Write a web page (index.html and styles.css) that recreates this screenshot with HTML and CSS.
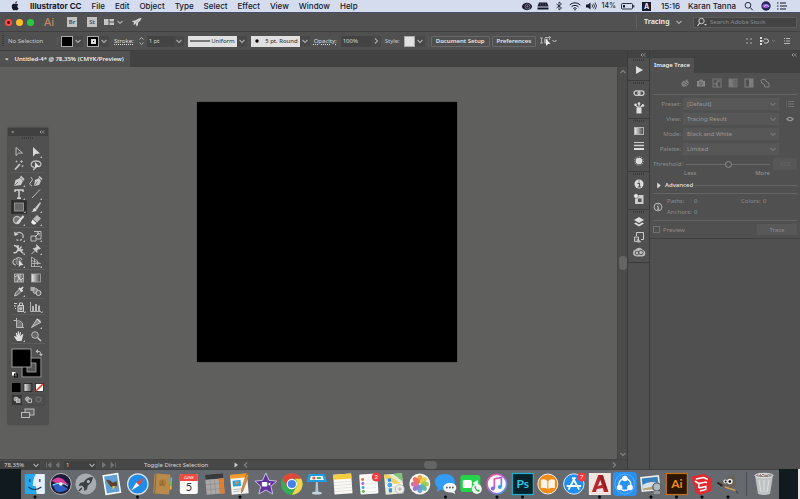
FILE: index.html
```html
<!DOCTYPE html>
<html lang="en">
<head>
<meta charset="utf-8">
<title>Untitled-4* @ 78,35% (CMYK/Preview)</title>
<link rel="stylesheet" href="styles.css">
</head>
<body>
<svg class="defs" aria-hidden="true">
  <symbol id="down" viewBox="0 0 8 8"><path d="M1.500 3l2.500 2.500L6.500 3" fill="none" stroke="currentColor" stroke-width="1.100"/></symbol>
  <symbol id="collapse" viewBox="0 0 6 4"><path d="M2.500 .5L1 2l1.500 1.500M5 .5L3.500 2 5 3.500" fill="none" stroke="currentColor" stroke-width=".9"/></symbol>
  <symbol id="grip" viewBox="0 0 12 2"><path d="M0 1h12" stroke="currentColor" stroke-width="2" stroke-dasharray="1 1"/></symbol>
  <symbol id="cloud" viewBox="0 0 14 12"><path d="M4.500 10.500a3.500 3.500 0 0 1-.8-6.900A4 4 0 0 1 10.800 4a3.300 3.300 0 0 1-.3 6.500z" fill="#bbb"/><circle cx="5" cy="7" r="1.800" fill="none" stroke="#505050" stroke-width=".9"/><circle cx="9" cy="6.500" r="2.200" fill="none" stroke="#505050" stroke-width=".9"/></symbol>
</svg>

<nav class="menubar" aria-label="Menu bar">
  <svg class="apple" viewBox="0 0 10 10"><path d="M7.400 5.200c0-1 .7-1.500.9-1.700C7.600 2.600 6.300 2.500 5.300 3c-1-.5-2.700-.3-3.300 1-.7 1.600 0 4 1.200 5.100.8.600 1.300 0 2.100 0s1.300.600 2.100 0c.5-.5 1-1.200 1.200-1.900-.7-.3-1.200-1.100-1.200-2zM5.200 2.500C5.100 1.300 6 .4 7 .2c.1 1.200-.7 2.100-1.800 2.300z" fill="#15192b"/></svg>
  <a href="#" class="app-name">Illustrator CC</a>
  <a href="#">File</a><a href="#">Edit</a><a href="#">Object</a><a href="#">Type</a><a href="#">Select</a><a href="#">Effect</a><a href="#">View</a><a href="#">Window</a><a href="#">Help</a>
  <div class="tray">
    <svg viewBox="0 0 12 10"><ellipse cx="6" cy="5.500" rx="5" ry="3.700" fill="#15192b"/><circle cx="6.500" cy="5.500" r="2.500" fill="none" stroke="#778"/><circle cx="6.500" cy="5.500" r="1" fill="#889"/></svg>
    <svg viewBox="0 0 12 10"><path d="M2 1.500h8l1.500 4H.5z M.5 6.500h11v2H.5z" fill="#15192b"/><path d="M6 1v5M4 1L3 6M8 1l1 5" stroke="#667" stroke-width=".6"/></svg>
    <svg viewBox="0 0 12 10"><path d="M3.500 3l5 4L6 9V1l2.500 2-5 4" fill="none" stroke="#15192b" stroke-width=".8"/></svg>
    <svg viewBox="0 0 12 10"><path d="M.7 4a7.500 7.500 0 0 1 10.600 0M2.500 5.800a5 5 0 0 1 7 0M4.300 7.500a2.500 2.500 0 0 1 3.400 0" fill="none" stroke="#15192b" stroke-width="1"/><circle cx="6" cy="8.800" r=".8" fill="#15192b"/></svg>
    <svg viewBox="0 0 12 10"><path d="M1 3.500h2L5.500 1.500v7L3 6.500H1z" fill="#15192b"/><path d="M7 3.500q1.200 1.500 0 3M8.500 2.500q2 2.500 0 5M10 1.500q3 3.500 0 7" fill="none" stroke="#15192b" stroke-width=".8"/></svg>
    <span class="percent">14%</span>
    <svg class="battery" viewBox="0 0 14 10"><rect x=".5" y="2.500" width="11" height="5.500" rx="1" fill="none" stroke="#15192b" stroke-width=".9"/><path d="M2 4h2v2.500H2z" fill="#15192b"/><path d="M12.800 4v2.500" stroke="#15192b"/></svg>
    <b class="input-source">A</b>
    <span>15:16</span>
    <span>Karan Tanna</span>
    <svg class="tray-search" viewBox="0 0 12 10"><circle cx="5" cy="4.300" r="2.900" fill="none" stroke="#15192b" stroke-width=".9"/><path d="M7.200 6.500l2.600 2.800" stroke="#15192b" stroke-width="1"/></svg>
    <svg class="tray-siri" viewBox="0 0 10 10"><circle cx="5" cy="5" r="4.700" fill="#23264e"/><path d="M1 5c2-3 5-3 8 0-3 3-6 3-8 0z" fill="#b04ad0"/><path d="M3 5.500q2-3 5 0" stroke="#7ee7ff" fill="none"/></svg>
    <svg class="tray-list" viewBox="0 0 12 10"><path d="M1 2h1.500M1 5h1.500M1 8h1.500M4 2h6M4 5h7M4 8h6" stroke="#15192b" stroke-width="1.100"/></svg>
  </div>
</nav>

<header class="appbar">
  <div class="lights"><button class="light red" aria-label="Close"></button><button class="light yellow" aria-label="Minimise"></button><button class="light green" aria-label="Zoom"></button></div>
  <span class="ai-logo">Ai</span>
  <button class="mini">Br</button>
  <button class="mini">St</button>
  <button class="arrange" aria-label="Arrange documents"><svg viewBox="0 0 10 8"><path d="M0 1h4.500v6H0zM5.500 1H10v2.500H5.500zM5.500 4.500H10V7H5.500z" fill="#c6c6c6"/></svg><svg class="chev"><use href="#down"/></svg></button>
  <svg class="rocket" viewBox="0 0 12 12"><path d="M11.500 1C8 1.500 6 2.500 4.500 4L1 4.500 0 6l2.500.3L1.500 9.500 4.700 8.500 5.500 11.500 7 10l.5-3.500C9.500 5.500 11 3.500 11.500 1z" fill="#d0d0d0"/><path d="M7.300 4.500L3 9" stroke="#777" stroke-width=".5"/></svg>
  <div class="workspace-pick"><label class="sr" for="ws">Workspace</label><select id="ws"><option>Tracing</option></select><svg class="chev"><use href="#down"/></svg></div>
  <label class="stock"><svg viewBox="0 0 12 10"><circle cx="5.500" cy="4" r="2.700" fill="none" stroke="#ccc"/><path d="M3.700 6L1.500 9" stroke="#ccc" stroke-width="1.200"/><path d="M8 7h3L9.500 8.700z" fill="#ccc"/></svg><input type="search" aria-label="Search Adobe Stock" placeholder="Search Adobe Stock"></label>
</header>

<div class="controlbar">
  <svg class="vgrip" viewBox="0 0 2 12"><path d="M1 0v12" stroke="#3c3c3c" stroke-width="2" stroke-dasharray="1 1"/></svg>
  <span class="selection">No Selection</span>
  <div class="pair first"><button class="swatch fill" aria-label="Fill"></button><button class="drop" aria-label="Fill options"><svg class="chev"><use href="#down"/></svg></button></div>
  <div class="pair"><button class="swatch stroke" aria-label="Stroke colour"><i></i></button><button class="drop" aria-label="Stroke options"><svg class="chev"><use href="#down"/></svg></button></div>
  <label class="link stroke-label" for="weight">Stroke:</label>
  <button class="stepper" aria-label="Step weight"><svg viewBox="0 0 7 10"><path d="M1.500 3.500l2-2 2 2M1.500 6.500l2 2 2-2" fill="none" stroke="#bbb" stroke-width=".9"/></svg></button>
  <div class="pair"><input id="weight" class="box weight" value="1 pt"><button class="drop" aria-label="Weights"><svg class="chev"><use href="#down"/></svg></button></div>
  <div class="pair"><button class="light-box"><svg class="profile" viewBox="0 0 20 4"><path d="M0 2h20" stroke="#111" stroke-width="1"/></svg>Uniform</button><button class="drop" aria-label="Profiles"><svg class="chev"><use href="#down"/></svg></button></div>
  <div class="pair"><button class="light-box"><svg class="dot" viewBox="0 0 4 4"><circle cx="2" cy="2" r="1.700"/></svg>5 pt. Round</button><button class="drop" aria-label="Brushes"><svg class="chev"><use href="#down"/></svg></button></div>
  <label class="link" for="opacity">Opacity:</label>
  <div class="pair"><input id="opacity" class="box opacity" value="100%"><button class="drop" aria-label="Opacity slider"><svg class="chev side"><use href="#down"/></svg></button></div>
  <span>Style:</span>
  <div class="pair"><button class="swatch white" aria-label="Graphic style"></button><button class="drop" aria-label="Styles"><svg class="chev"><use href="#down"/></svg></button></div>
  <div class="doc-buttons"><button>Document Setup</button><button>Preferences</button></div>
  <svg class="similar" viewBox="0 0 18 10"><path d="M0 2h3M0 7h3M1.500 2v5M5 1.500h6M9.500 0v4" stroke="#aaa" fill="none"/><path d="M4 2.500h4v5H4z" fill="#999"/><path d="M6 3v7l2-2 2.500-.2z" fill="#eee"/><path d="M12.500 4l2 2 2-2" stroke="#ccc" fill="none"/></svg>
  <div class="bar-end">
    <svg viewBox="0 0 8 8"><path d="M1 1h2v2H1zM5 1h2v2H5zM1 5h2v2H1zM5 5h2v2H5z" fill="#808080"/></svg>
    <svg class="snap" viewBox="0 0 18 8"><path d="M1 0h2v2H1zM1 3h2v2H1zM1 6h2v2H1z" fill="#ddd"/><path d="M3 4h2M5 2h2.500a2 2 0 0 1 0 4H5" stroke="#ccc" fill="none"/><path d="M13 3l1.500 1.500L16 3" stroke="#777" fill="none"/></svg>
    <svg viewBox="0 0 8 8"><path d="M1 1.500h1M3 1.500h4M3 4h4M1 6.500h6M1.500 3.500v1" stroke="#b5b5b5" fill="none"/></svg>
  </div>
</div>

<main class="workspace">
  <section class="document">
    <div class="tabs"><div class="tab"><button aria-label="Close tab">×</button><span>Untitled-4* @ 78,35% (CMYK/Preview)</span></div></div>
    <div class="stage">
      <div class="canvas">
        <div class="artboard"></div>
        <aside class="tools" aria-label="Tools">
          <div class="tools-head"><span>×</span><svg><use href="#collapse"/></svg></div>
          <svg class="grip"><use href="#grip"/></svg>
          <div class="group">
            <svg class="tool" viewBox="0 0 14 12"><path d="M4 1.500v8l2.500-2.300L10.500 7z" fill="none" stroke="#c8c8c8" stroke-width=".9"/></svg>
            <svg class="tool more" viewBox="0 0 14 12"><path d="M4 1v9.500L6.500 8l4.500-.5z" fill="#d8d8d8"/><path class="corner" d="M13 10v2h-2z"/></svg>
            <svg class="tool" viewBox="0 0 14 12"><path d="M3 10.500L8 5" stroke="#ccc" stroke-width="1.700"/><path d="M9.500 1v3M8 2.500h3M4.500 1.500v2M3.500 2.500h2M10.500 6v2M9.500 7h2" stroke="#bbb" stroke-width=".8"/></svg>
            <svg class="tool" viewBox="0 0 14 12"><path d="M5 8C1 8 1 2 7 2s6 5 3 5.500M5 8q1 2-1 3" fill="none" stroke="#bbb" stroke-width="1.300"/><path d="M6 3v7l1.800-1.800L11 8z" fill="#ddd"/></svg>
          </div>
          <div class="group">
            <svg class="tool" viewBox="0 0 14 12"><path d="M2 11l1.500-6L8 3l3 3-2 4z" fill="#ccc"/><path d="M8.500 1.500l3.500 3.500" stroke="#ccc" stroke-width="1.800"/><path d="M2.500 10.500l3.500-3.500" stroke="#505050" stroke-width=".7"/><path class="corner" d="M13 10v2h-2z"/></svg>
            <svg class="tool" viewBox="0 0 14 12"><path d="M5 11l1-6 4-2 2 3-2 4z" fill="#ccc"/><path d="M10 1.500L13 4.500" stroke="#ccc" stroke-width="1.600"/><path d="M2 2q3 3 0 5t1 4" fill="none" stroke="#bbb"/><path d="M5.500 10.500l3-4" stroke="#505050" stroke-width=".7"/></svg>
            <svg class="tool" viewBox="0 0 14 12"><path d="M3 4V2h8v2M7 2v8M5 10.200h4" fill="none" stroke="#d4d4d4" stroke-width="1.400"/><path class="corner" d="M13 10v2h-2z"/></svg>
            <svg class="tool" viewBox="0 0 14 12"><path d="M3 10l8-8.500" stroke="#bbb"/><path class="corner" d="M13 10v2h-2z"/></svg>
            <svg class="tool selected" viewBox="0 0 14 12"><rect x="2.500" y="2" width="9" height="8" fill="#666" stroke="#999" stroke-width=".9"/><path class="corner" d="M13.500 10v2h-2z"/></svg>
            <svg class="tool" viewBox="0 0 14 12"><path d="M6 7l5-6 1 1-4 6.500z" fill="#ccc"/><path d="M2 10.500q2 0 2.500-2.500T8 9q-1.500 2.500-6 1.500z" fill="#ddd"/><path class="corner" d="M13 10v2h-2z"/></svg>
            <svg class="tool" viewBox="0 0 14 12"><circle cx="5" cy="6" r="3.600" fill="#777" stroke="#bbb" stroke-width="1.200"/><path d="M5 9.500l6.500-7.500" stroke="#ddd" stroke-width="2"/><path class="corner" d="M13 10v2h-2z"/></svg>
            <svg class="tool" viewBox="0 0 14 12"><path d="M8 1l4 3.500-4 4-4-3.500z" fill="#bbb"/><path d="M3.500 5.500l4 3.500L6 10.500H4L2 8.500z" fill="#eee"/><path class="corner" d="M13 10v2h-2z"/></svg>
          </div>
          <div class="group">
            <svg class="tool" viewBox="0 0 14 12"><path d="M3.500 4.500a4 4 0 1 1 1 5" fill="none" stroke="#bbb" stroke-width="1.300" stroke-dasharray="12 1.500 2 1.500"/><path d="M2 1.500l.5 4.500 4-1.500z" fill="#ccc"/><path class="corner" d="M13 10v2h-2z"/></svg>
            <svg class="tool" viewBox="0 0 14 12"><path d="M2 6h5v5H2zM5 1.500h7V9H7" fill="none" stroke="#bbb"/><path d="M6 7l4-4M7.500 3H10v2.500" stroke="#ccc" fill="none"/><path class="corner" d="M13 10v2h-2z"/></svg>
            <svg class="tool" viewBox="0 0 14 12"><path d="M2 2.500q3 0 4 3t5 1M1.500 9.500q3 1 4-2t3 0 3 2.500M6 2l.5 5M9.500 3.500L6 8" fill="none" stroke="#ccc" stroke-width="1.400"/><path class="corner" d="M13 10v2h-2z"/></svg>
            <svg class="tool" viewBox="0 0 14 12"><path d="M7.500 1.500l4 4-1.200.5-1-.2L8 7.500 8 9.500 4 5.500l2-.2L7.700 4z" fill="#d0d0d0" stroke="#d0d0d0" stroke-width=".6"/><path d="M6 7.500L2.500 11" stroke="#ccc"/><path class="corner" d="M13 10v2h-2z"/></svg>
            <svg class="tool" viewBox="0 0 14 12"><path d="M4 9a3 3 0 0 1 0-6 3.500 3.500 0 0 1 6 1" fill="none" stroke="#bbb" stroke-width="1.200"/><circle cx="6.500" cy="6" r="2.500" fill="#777" stroke="#bbb" stroke-dasharray="1 1"/><path d="M7 4.500v6.500l1.500-1.700 3-.3z" fill="#ddd"/><path class="corner" d="M13 10v2h-2z"/></svg>
            <svg class="tool" viewBox="0 0 14 12"><path d="M2.500 1v10M2.500 1l6 4v4M2.500 4.500l9 3M2.500 7.500h9M2.500 10.500h9M5.500 3v8" fill="none" stroke="#bbb" stroke-width=".8"/><path class="corner" d="M13 10v2h-2z"/></svg>
          </div>
          <div class="group">
            <svg class="tool" viewBox="0 0 14 12"><rect x="2.500" y="2" width="9" height="8" fill="#777" stroke="#bbb" stroke-width=".8"/><path d="M3 5q3-3 4 1t4 0M5 10q3-3 1-8M8.500 2q-2 4 1 8" fill="none" stroke="#ddd" stroke-width=".8"/></svg>
            <svg class="tool" viewBox="0 0 14 12"><rect x="2.500" y="2" width="9" height="8" fill="url(#gr)" stroke="#aaa" stroke-width=".8"/></svg>
            <svg class="tool" viewBox="0 0 14 12"><path d="M2.500 11l1-3L8 3.500l2 2L5.500 10z" fill="#777" stroke="#ccc" stroke-width=".9"/><path d="M7 3l3.500 3.500M9 4.500l2-2.500" stroke="#ddd" stroke-width="1.800"/><path class="corner" d="M13 10v2h-2z"/></svg>
            <svg class="tool" viewBox="0 0 14 12"><rect x="1.500" y="2" width="4.500" height="4" fill="#aaa"/><circle cx="6.500" cy="6" r="2.500" fill="#888" stroke="#bbb"/><circle cx="9.500" cy="8" r="2.500" fill="#666" stroke="#ccc"/></svg>
          </div>
          <div class="group">
            <svg class="tool" viewBox="0 0 14 12"><rect x="6" y="4.500" width="5.500" height="6" fill="#777" stroke="#ccc"/><path d="M7.500 4V2h3v2M2 2.500h3M2 5h2M3 7.500h1" stroke="#ccc" fill="none"/><circle cx="8.700" cy="7.500" r="1.500" fill="#bbb"/><path class="corner" d="M13.500 10v2h-2z"/></svg>
            <svg class="tool" viewBox="0 0 14 12"><path d="M1.500 1v9.500H12" fill="none" stroke="#bbb" stroke-width=".9"/><path d="M4 10V5M7 10V3M10 10V4.500" stroke="#ccc" stroke-width="1.600"/><path class="corner" d="M13.500 10v2h-2z"/></svg>
          </div>
          <div class="group last">
            <svg class="tool" viewBox="0 0 14 12"><path d="M1.500 3.500h3M4.500 1v9.500H12M4.500 4h3.500l2.500 2v4" fill="none" stroke="#bbb"/><path d="M5 4.500h2.500L10 6.500v3.500H5z" fill="#777"/></svg>
            <svg class="tool" viewBox="0 0 14 12"><path d="M2.500 10.500L8 2q4 1 3.500 3.500L6 8.500z" fill="#888" stroke="#ccc" stroke-width=".9"/><path d="M8 2l3.500 3.500" stroke="#ddd"/><path class="corner" d="M13 10v2h-2z"/></svg>
            <svg class="tool" viewBox="0 0 14 12"><path d="M5 11L2 6.500l1-.5 1.500 1L3.800 3l1-.3 1 2.800V1.500h1.200v4l1-3.500 1 .3-.7 4L10.500 4l.9.500L9.500 11z" fill="#ddd"/><path class="corner" d="M13 10v2h-2z"/></svg>
            <svg class="tool" viewBox="0 0 14 12"><circle cx="6" cy="5" r="3.300" fill="#666" stroke="#bbb"/><path d="M8.500 7.500l3.500 3.500" stroke="#ccc" stroke-width="1.500"/></svg>
          </div>
          <svg class="colors" viewBox="0 0 34 32"><rect x="14" y="13" width="13" height="13" fill="none" stroke="#050505" stroke-width="5"/><rect x="11" y="10" width="19" height="19" fill="none" stroke="#999" stroke-width=".8"/><rect x="16" y="15" width="9" height="9" fill="#555" stroke="#aaa" stroke-width=".8"/><rect x="1" y="1" width="19" height="18" fill="#000" stroke="#aaa" stroke-width=".9"/><path d="M26 3.500h2q2 0 2 3" fill="none" stroke="#bbb"/><path d="M27 1v4.500L24.500 3.500zM28 6h4l-2 2.500z" fill="#bbb"/><path d="M1 24h3.500v3.500H1z" fill="#fff"/><rect x="3.500" y="26" width="3" height="3" fill="none" stroke="#111"/></svg>
          <svg class="modes" viewBox="0 0 34 11"><rect x="1" y="1" width="8.500" height="9" fill="#000"/><rect x="13" y="1.500" width="8" height="8" fill="url(#gr)" stroke="#222" stroke-width=".8"/><rect x="24.500" y="1.500" width="8" height="8" fill="#fff" stroke="#222" stroke-width=".8"/><path d="M25 9l7-7" stroke="#f0351f" stroke-width="1.600"/></svg>
          <svg class="modes" viewBox="0 0 34 11"><rect x="1" y="0" width="32" height="10" fill="none" stroke="#454545" stroke-width=".8"/><rect x="1" y="0" width="10" height="10" fill="#373737"/><g fill="#999" stroke="#ccc" stroke-width=".8"><circle cx="5" cy="4" r="2"/><rect x="5.500" y="4" width="3.500" height="3.500"/><circle cx="16.500" cy="4" r="2"/><rect x="17" y="4" width="3.500" height="3.500" fill="#505050"/></g><circle cx="27.500" cy="4.500" r="2.500" fill="none" stroke="#777" stroke-width=".9"/></svg>
          <svg class="screens" viewBox="0 0 34 14"><rect x="14" y="2" width="9" height="6" fill="#666" stroke="#bbb"/><rect x="10.500" y="5.500" width="8" height="5" fill="#555" stroke="#bbb"/></svg>
        </aside>
      </div>
      <div class="vscroll"><svg class="chev up"><use href="#down"/></svg><i></i><svg class="chev"><use href="#down"/></svg></div>
    </div>
    <footer class="status">
      <div class="zoom"><span>78,35%</span><svg class="chev"><use href="#down"/></svg></div>
      <svg class="nav" viewBox="0 0 18 8"><path d="M2.500 1.500v5M7 1.500v5L4 4zM15 1.500v5L12 4z" stroke="#777" fill="#777" stroke-width=".7"/></svg>
      <div class="page"><span>1</span><svg class="chev"><use href="#down"/></svg></div>
      <svg class="nav" viewBox="0 0 18 8"><path d="M2.500 1.500v5L5.500 4zM11 1.500v5L14 4zM15.500 1.500v5" stroke="#777" fill="#777" stroke-width=".7"/></svg>
      <span class="hint">Toggle Direct Selection</span>
      <svg class="play" viewBox="0 0 8 8"><path d="M2.500 1.500v5L6 4z" fill="#ccc"/></svg>
      <div class="hscroll"><svg class="chev back"><use href="#down"/></svg><i></i><svg class="chev side"><use href="#down"/></svg></div>
    </footer>
  </section>

  <aside class="strip" aria-label="Collapsed panels">
    <div class="strip-head"><svg><use href="#collapse"/></svg></div>
    <div class="strip-group"><svg class="grip"><use href="#grip"/></svg>
      <svg viewBox="0 0 14 12"><path d="M4 2v8l7-4z" fill="#ddd"/></svg></div>
    <div class="strip-group"><svg class="grip"><use href="#grip"/></svg>
      <svg viewBox="0 0 14 12"><rect x="2" y="3.800" width="6" height="4.500" rx="2.200" fill="none" stroke="#ccc" stroke-width="1.300"/><rect x="6" y="3.800" width="6" height="4.500" rx="2.200" fill="none" stroke="#ccc" stroke-width="1.300"/></svg>
      <svg viewBox="0 0 14 12"><path d="M4.500 6h5v5.500h-5z" fill="#ddd"/><path d="M7 6V1M6 6L3.500 3M8 6l3-3.500" stroke="#ccc" stroke-width="1.200"/><circle cx="3.500" cy="2.800" r="1.300" fill="#ddd"/><circle cx="7" cy="1.500" r="1.300" fill="#ddd"/><circle cx="11" cy="3.500" r="1.300" fill="#ddd"/></svg></div>
    <div class="strip-group"><svg class="grip"><use href="#grip"/></svg>
      <svg viewBox="0 0 14 12"><rect x="2.500" y="2.500" width="9" height="7" fill="url(#gr)" stroke="#bbb" stroke-width=".9"/></svg>
      <svg viewBox="0 0 14 12"><path d="M2 2.500h10" stroke="#ccc"/><path d="M2 5.500h10" stroke="#ccc" stroke-width="1.500"/><path d="M2 9h10" stroke="#ddd" stroke-width="2"/></svg>
      <svg viewBox="0 0 14 12"><circle cx="7" cy="6" r="4.300" fill="none" stroke="#999" stroke-width="1.200" stroke-dasharray="1 1"/><circle cx="7" cy="6" r="3.300" fill="#ddd"/></svg></div>
    <div class="strip-group"><svg class="grip"><use href="#grip"/></svg>
      <svg viewBox="0 0 14 12"><circle cx="7" cy="6" r="4.500" fill="#ddd"/><path d="M5.500 5.300h2V9M5.500 9h3.500M6.500 3h1.200" stroke="#505050" fill="none" stroke-width="1.200"/></svg>
      <svg viewBox="0 0 14 12"><path d="M3 2h8.500v9H3z" fill="#ccc"/><circle cx="4" cy="3" r="2.300" fill="#eee" stroke="#505050" stroke-width=".6"/><path d="M6 5.500h3.500V9H6z" fill="#505050"/></svg></div>
    <div class="strip-group"><svg class="grip"><use href="#grip"/></svg>
      <svg viewBox="0 0 14 12"><path d="M7 1l5 3-5 3-5-3z" fill="#ddd"/><path d="M2 7.500L7 10.500l5-3-1.800-1L7 8.400 3.800 6.500z" fill="#ddd"/></svg>
      <svg viewBox="0 0 14 12"><path d="M4.500 5V1.500h7v7H9" fill="none" stroke="#ccc"/><path d="M2.500 6h4v4.500h-4zM6 8l2.500 3h-3z" fill="#666" stroke="#ccc" stroke-width=".9"/></svg>
      <svg><use href="#cloud"/></svg></div>
  </aside>

  <section class="panel">
    <div class="panel-head"><svg><use href="#collapse"/></svg></div>
    <div class="panel-tabs"><h2>Image Trace</h2></div>
    <form class="trace" onsubmit="return false">
      <div class="presets">
        <svg viewBox="0 0 10 10"><path d="M1 6q2-4 4-3l2-2 2 4-2 3-4 1z" fill="#808080"/><path d="M3 5l4 2M5 3l3 3" stroke="#505050" stroke-width=".7"/></svg>
        <svg viewBox="0 0 10 10"><path d="M1 3h2l1-1.500h2L7 3h2v5.500H1z" fill="#888"/><circle cx="5" cy="5.500" r="1.600" fill="#888" stroke="#505050" stroke-width=".9"/></svg>
        <svg viewBox="0 0 10 10"><rect x="1" y="1" width="8" height="8" fill="none" stroke="#7a7a7a"/><path d="M2 6h3V3h3M5 6v3" stroke="#888" fill="none"/></svg>
        <svg viewBox="0 0 10 10"><rect x="1" y="1" width="8" height="8" fill="url(#dim)" stroke="#777" stroke-width=".8"/></svg>
        <svg viewBox="0 0 10 10"><rect x="1" y="1" width="8" height="8" fill="none" stroke="#808080"/><path d="M5 1h4v8H5z" fill="#7c7c7c"/></svg>
        <svg viewBox="0 0 10 10"><path d="M1 2l4-.8 1 2.300 3 1.500v4H5L4 6 1.500 5z" fill="none" stroke="#888" stroke-width=".9"/></svg>
      </div>
      <div class="row"><label for="preset">Preset:</label><div class="field"><select id="preset"><option>[Default]</option></select><svg class="chev"><use href="#down"/></svg></div><svg class="side-icon" viewBox="0 0 8 8"><path d="M0 1.500h1M2 1.500h6M0 4h1M2 4h6M0 6.500h1M2 6.500h6" stroke="#777" stroke-width=".9"/></svg></div>
      <div class="row"><label for="view">View:</label><div class="field"><select id="view"><option>Tracing Result</option></select><svg class="chev"><use href="#down"/></svg></div><svg class="side-icon" viewBox="0 0 8 8"><path d="M1 4q3-3.500 6 0-3 3.500-6 0z" fill="none" stroke="#999" stroke-width="1.200"/></svg></div>
      <div class="row"><label for="mode">Mode:</label><div class="field"><select id="mode"><option>Black and White</option></select><svg class="chev"><use href="#down"/></svg></div></div>
      <div class="row"><label for="palette">Palette:</label><div class="field"><select id="palette"><option>Limited</option></select><svg class="chev"><use href="#down"/></svg></div></div>
      <div class="threshold"><label for="threshold">Threshold:</label><input id="threshold" type="range" min="0" max="255" value="128"><input class="value" aria-label="Threshold value" value="128" disabled></div>
      <div class="limits"><span>Less</span><span>More</span></div>
      <button class="advanced" type="button"><svg viewBox="0 0 6 8"><path d="M1 .5v7L5 4z" fill="#ddd"/></svg>Advanced</button>
      <div class="stats">
        <svg viewBox="0 0 10 10"><circle cx="5" cy="5" r="3.900" fill="none" stroke="#c5c5c5" stroke-width=".9"/><path d="M4 4.400h1.200V7M4 7.200h2.300M4.700 2.700h.9" stroke="#ccc" stroke-width=".9" fill="none"/></svg>
        <dl><dt>Paths:</dt><dd>0</dd><dt class="far">Colors:</dt><dd>0</dd><dt>Anchors:</dt><dd>0</dd></dl>
      </div>
      <div class="actions"><label><input type="checkbox">Preview</label><button type="button">Trace</button></div>
    </form>
  </section>
</main>

<footer class="desktop">
  <div class="dock">
    <svg viewBox="0 0 24 24"><rect x="2" y="2" width="20" height="20" rx="1" fill="#23a9f0"/><path d="M13 2h8a1 1 0 0 1 1 1v18a1 1 0 0 1-1 1h-7q-1-4-1-8h-3q0-7 3-12z" fill="#e8eef6"/><path d="M7 7v3M17 7v3M5.500 15q6.500 5 13 0" fill="none" stroke="#143a5c" stroke-width="1.200"/></svg>
    <svg viewBox="0 0 24 24"><circle cx="12" cy="12" r="10.500" fill="#1d1b3a" stroke="#bbb"/><path d="M3 9q5-6 11-2l6 6q-7-2-9 0z" fill="#d8409c"/><path d="M3 12l9 0 7 5q-6 5-12 2z" fill="#2d5ec0"/><path d="M4 13q8-4 15 1" stroke="#8ff0ff" stroke-width="1" fill="none"/><circle cx="12" cy="12" r="1.800" fill="#fff"/></svg>
    <svg viewBox="0 0 24 24"><circle cx="12" cy="12" r="10.500" fill="#a7adaf"/><path d="M19 5q-6 0-9 5L6 11l-1 3 3-.5 2.500 2.500L10 19l3-1.500 1-4Q19 10 19 5z" fill="#3a4146"/><circle cx="14.500" cy="9.500" r="1.500" fill="#bbb"/><path d="M5 19l3-3" stroke="#3a4146" stroke-width="1.500"/></svg>
    <svg viewBox="0 0 24 24"><g transform="rotate(-9 12 12)"><rect x="4" y="2" width="16" height="20" fill="#fff"/><rect x="5.500" y="3.500" width="13" height="17" fill="#5f9fd6"/><path d="M7 7q4 0 6 4l4-1q1 5-2 6l-4-1-2-3z" fill="#5d432a"/><path d="M12 14l4 1-4 3z" fill="#d9b85b"/></g></svg>
    <svg viewBox="0 0 24 24"><circle cx="12" cy="12" r="10.200" fill="#208de8" stroke="#dfe3e6" stroke-width="1.200"/><path d="M18.500 5.500l-5 8-3-3z" fill="#f04438"/><path d="M5.500 18.500l5-8 3 3z" fill="#f5f5f5"/></svg>
    <svg viewBox="0 0 24 24"><g transform="rotate(4 12 12)"><path d="M19 5h2v4h-2z" fill="#54b8ef"/><path d="M19 9h2v4h-2z" fill="#63bf54"/><path d="M19 13h2v4h-2z" fill="#f3b232"/><rect x="3" y="2" width="16" height="20" rx="1" fill="#b88a4c"/><path d="M4.500 2v20" stroke="#8c642f"/><circle cx="11.500" cy="11" r="3.500" fill="#a67a3c"/><path d="M9 14q2.500-4 5 0M11.500 8.500v3" stroke="#8d662f" fill="none"/></g></svg>
    <svg viewBox="0 0 24 24"><rect x="3" y="2" width="18" height="20" rx="2" fill="#fafafa"/><path d="M3 9V4a2 2 0 0 1 2-2h14a2 2 0 0 1 2 2v5z" fill="#ef4a43"/><text class="cal-month" x="12" y="7">JUNE</text><text class="cal-day" x="12" y="19">5</text></svg>
    <svg viewBox="0 0 24 24"><g transform="rotate(-5 12 12)"><rect x="3" y="2" width="18" height="20" fill="#aaa9a7"/><path d="M3 2h18v5H3z" fill="#363a3c"/><path d="M16.500 7H21v15h-4.500z" fill="#ed7c25"/><path d="M3 12h18M3 17h18M7.500 7v15M12 7v15M16.500 7v15" stroke="#8a8682" stroke-width=".5"/></g></svg>
    <svg viewBox="0 0 24 24"><g transform="rotate(-5 12 12)"><path d="M3 3h17v19H3z" fill="#f5f4f1"/><path d="M3 2h17v4H3z" fill="#f39a2d"/><rect x="5" y="8" width="8" height="6" fill="#1ca3e5"/><path d="M9 13L7 10q1-2 2-.5 1-1.500 2 .5z" fill="#f2872f"/><path d="M5 17h8M5 19h6" stroke="#aaa" stroke-width=".7"/></g><path d="M21 3l-6 16-1.500 2V18l5-16z" fill="#dd9039" stroke="#8c5a21" stroke-width=".5"/></svg>
    <svg viewBox="0 0 24 24"><path d="M12 1l3.200 7.300 7.800.8-5.900 5.200L18.900 22 12 18l-6.900 4 1.800-7.700L1 9.100l7.800-.8z" fill="#5f329d" stroke="#c9bdde" stroke-width="1"/><rect x="8" y="10" width="5.500" height="4.500" rx="1" fill="#fff"/><path d="M14 12l2.500-1.500v3.500z" fill="#fff"/></svg>
    <svg viewBox="0 0 24 24"><circle cx="12" cy="12" r="10.800" fill="#3aaa58"/><path d="M2.600 6.700A10.800 10.800 0 0 1 21.400 6.700H12l-4.700 8z" fill="#df473c"/><path d="M21.400 6.700A10.800 10.800 0 0 1 12 22.800l4.700-8L17 9l-2-2.300z" fill="#fbd14b"/><circle cx="12" cy="12" r="5.200" fill="#fff"/><circle cx="12" cy="12" r="4.100" fill="#4384ef"/></svg>
    <svg viewBox="0 0 24 24"><path d="M4 2h16l2 7v1H2V9z" fill="#239ce2"/><path d="M6 4h12l1 4H5z" fill="#edf6fb"/><circle cx="9" cy="6" r="1.500" fill="#e75c4b"/><path d="M12 5h4v2h-4z" fill="#45b36b"/><path d="M11 10h2l.5 10h-3z" fill="#aec5d3"/><ellipse cx="12" cy="21" rx="5" ry="1.600" fill="#c5d5df"/></svg>
    <svg viewBox="0 0 24 24"><g transform="rotate(-4 12 12)"><rect x="3" y="2" width="18" height="20" fill="#faf9f3"/><path d="M3 2h18v5H3z" fill="#f5cd3e"/><path d="M3 10h18M3 13h18M3 16h18M3 19h18" stroke="#ddd" stroke-width=".7"/></g></svg>
    <svg viewBox="0 0 24 24"><g transform="rotate(-4 12 12)"><rect x="3" y="2" width="18" height="20" rx="1" fill="#fafafa"/><circle cx="6" cy="7" r="1.500" fill="#ed674e"/><circle cx="6" cy="11" r="1.500" fill="#b85ad8"/><circle cx="6" cy="15" r="1.500" fill="#37a7e8"/><circle cx="6" cy="19" r="1.500" fill="#5cba4b"/><path d="M9 8h10M9 12h10M9 16h10M9 20h10" stroke="#ddd" stroke-width=".6"/></g><circle cx="19.500" cy="5" r="4.500" fill="#f33b3b"/><text class="badge" x="19.500" y="7">2</text></svg>
    <svg viewBox="0 0 24 24"><g transform="rotate(-5 12 12)"><rect x="3" y="2" width="18" height="20" fill="#e9ead6"/><path d="M12 2h9v8z" fill="#79c873"/><path d="M3 2h4l14 12v4L3 5z" fill="#f3d25a"/><path d="M8 6v14" stroke="#2390df" stroke-width="3"/><path d="M3 13h18" stroke="#fff" stroke-width="2"/></g><circle cx="8" cy="13" r="3" fill="#4ba5e6" stroke="#fff"/><circle cx="18" cy="17" r="4.500" fill="#eee" stroke="#aaa" stroke-width=".7"/><path d="M16 17h4M18 15v4" stroke="#999" stroke-width=".7"/></svg>
    <svg viewBox="0 0 24 24"><circle cx="12" cy="12" r="10.500" fill="#f4f3ef"/><g opacity=".9"><ellipse cx="12" cy="7" rx="2.600" ry="4" fill="#f59b27"/><ellipse cx="12" cy="7" rx="2.600" ry="4" fill="#e6cf35" transform="rotate(45 12 12)"/><ellipse cx="12" cy="7" rx="2.600" ry="4" fill="#9cc748" transform="rotate(90 12 12)"/><ellipse cx="12" cy="7" rx="2.600" ry="4" fill="#52b69a" transform="rotate(135 12 12)"/><ellipse cx="12" cy="7" rx="2.600" ry="4" fill="#5b96d8" transform="rotate(180 12 12)"/><ellipse cx="12" cy="7" rx="2.600" ry="4" fill="#8b70c8" transform="rotate(225 12 12)"/><ellipse cx="12" cy="7" rx="2.600" ry="4" fill="#d0649d" transform="rotate(270 12 12)"/><ellipse cx="12" cy="7" rx="2.600" ry="4" fill="#ed6652" transform="rotate(315 12 12)"/></g></svg>
    <svg viewBox="0 0 24 24"><path d="M11 2c6 0 10 3.500 10 8s-4 8-10 8q-2 0-4-.6L3 20l1-4Q1 13.500 1 10c0-4.500 4-8 10-8z" fill="#319df6"/><path d="M16 11c4 0 6.500 2 6.500 4.800 0 1.500-.7 2.700-2 3.500l1 2.700-3.500-1.500h-2c-4 0-6.500-2-6.500-4.700S12 11 16 11z" fill="#f4f7fb"/><circle cx="13" cy="15.500" r="1" fill="#666"/><circle cx="16" cy="15.500" r="1" fill="#666"/><circle cx="19" cy="15.500" r="1" fill="#666"/></svg>
    <svg viewBox="0 0 24 24"><rect x="1.500" y="3" width="20" height="17" rx="3" fill="#26d44c"/><rect x="4" y="8" width="9" height="8" rx="1.500" fill="#fff"/><path d="M14 11l5-3v7z" fill="#fff"/><circle cx="18" cy="17" r="5" fill="#f2f5f2"/><path d="M15.500 15q1 4 4.500 5l1-1.500-1.500-1-1 .5-1.500-2 .5-1-1-1z" fill="#2bbb4c"/></svg>
    <svg viewBox="0 0 24 24"><circle cx="12" cy="12" r="9.800" fill="#fafafa" stroke="url(#tune)" stroke-width="1.600"/><path d="M9.500 16V7l7-1.500v9.300" fill="none" stroke="url(#tune)" stroke-width="1.700"/><circle cx="8" cy="16.500" r="2" fill="#7a6cf0"/><circle cx="15" cy="15" r="2" fill="#3f9cf0"/></svg>
    <svg viewBox="0 0 24 24"><rect x="1.500" y="1.500" width="21" height="21" fill="#03222c" stroke="#1bb2cf" stroke-width="1.200"/><text class="adobe ps" x="12" y="16">Ps</text></svg>
    <svg viewBox="0 0 24 24"><circle cx="12" cy="12" r="10" fill="#f18c1b" stroke="#eee" stroke-width="1"/><path d="M5 8q4-2 6.500 1v8Q9 15 5 16zM19 8q-4-2-6.500 1v8q2.500-2 6.500-1z" fill="#fff6e8"/></svg>
    <svg viewBox="0 0 24 24"><circle cx="12" cy="12" r="10.200" fill="#1e8ff2" stroke="#dfe9f3" stroke-width="1"/><path d="M13 6l-6 11M11 6l6 11M5.500 14h13" stroke="#fff" stroke-width="1.800" stroke-linecap="round"/><circle cx="20" cy="5" r="4.500" fill="#f33b3b"/><text class="badge" x="20" y="7">7</text></svg>
    <svg viewBox="0 0 24 24"><rect x="1" y="1" width="22" height="22" fill="#f1e3df"/><path d="M4 20L10.500 3H15l5.500 17H16l-1-4-6 1-1 3zM10 14l4-1-1.500-5z" fill="#b7262d"/><path d="M10.500 3H15l5.500 17-4-4z" fill="#861a22" opacity=".6"/></svg>
    <svg viewBox="0 0 24 24"><rect y="0" width="24" height="24" rx="4" fill="#2a91f2"/><circle cx="12" cy="12" r="10" fill="none" stroke="#67b4f8" stroke-width=".8"/><circle cx="12" cy="12.500" r="6" fill="none" stroke="#fff" stroke-width="1.300"/><circle cx="12" cy="6.500" r="2.800" fill="#fff"/><circle cx="6.800" cy="15.500" r="2.800" fill="#fff"/><circle cx="17.200" cy="15.500" r="2.800" fill="#fff"/></svg>
    <svg viewBox="0 0 24 24"><g transform="rotate(-6 12 12)"><rect x="2" y="4" width="19" height="15" fill="#eee"/><rect x="3.500" y="5.500" width="16" height="12" fill="#3781be"/><path d="M3.500 12q8-4 16 0v5.500h-16z" fill="#d5e1e6"/><path d="M3.500 16l16-2v3.500h-16z" fill="#b8a277"/></g><circle cx="18" cy="15" r="4" fill="#aebbc5" stroke="#555" stroke-width="1.200"/><path d="M15 19h6v3h-6z" fill="#9b9b9b"/></svg>
    <svg viewBox="0 0 24 24"><rect x="1.500" y="1.500" width="21" height="21" fill="#2a1602" stroke="#c96f12" stroke-width="1.200"/><text class="adobe ai" x="12" y="16">Ai</text></svg>
    <svg viewBox="0 0 24 24"><path d="M2 4.500L14 2l8 5-1 12-11 4-5-3V14L3 12z" fill="#e2292f"/><path d="M6 7l8-1.500 4 2M9 11.500l7-1.500 1 1M5 9l4 2.500V16M9 16l7-1.500v3L10 19" fill="none" stroke="#fff" stroke-width="1.500"/></svg>
    <svg viewBox="0 0 24 24"><path d="M1 10l5 0 5-4 7-4 2 7q1 6-5 7.500-7 1.500-9-3z" fill="#686358"/><circle cx="9.500" cy="9.500" r="2" fill="#eee"/><circle cx="14" cy="9.500" r="2.800" fill="#eee"/><circle cx="9.800" cy="9.500" r="1"/><circle cx="14" cy="9.500" r="1.300"/><path d="M1.500 10.500l5 3.500" stroke="#222" stroke-width="1.800"/><path d="M9 15l11 3.500" stroke="#c69d5c" stroke-width="1.800"/><path d="M19 17l3.500 3.500-1 1.500z" fill="#444"/></svg>
    <div class="trash"><svg viewBox="0 0 24 24"><path d="M3 3h18l-3 19q-6 2-12 0z" fill="#c9cdcd" opacity=".9"/><ellipse cx="12" cy="3.500" rx="9" ry="2.200" fill="#858c8a" stroke="#eee" stroke-width=".9"/><path d="M6 3l3-1 2 2 3-2 3 2" stroke="#ddd" fill="none"/><path d="M8 3h1M14 4h2" stroke="#dd5a4a"/><path d="M7 8l2 12M17 8l-2 12M12 8v12" stroke="#e3e3e3" stroke-width=".8"/></svg></div>
  </div>
</footer>
<svg class="defs" aria-hidden="true"><defs>
  <linearGradient id="gr"><stop stop-color="#eee"/><stop offset="1" stop-color="#444"/></linearGradient>
  <linearGradient id="dim"><stop stop-color="#858585"/><stop offset="1" stop-color="#5c5c5c"/></linearGradient>
  <linearGradient id="tune" x2="1" y2="1"><stop stop-color="#f4578c"/><stop offset=".5" stop-color="#b063dd"/><stop offset="1" stop-color="#37a8ef"/></linearGradient>
</defs></svg>
</body>
</html>
```
FILE: styles.css
```css
* { box-sizing: border-box; }
body {
  margin: 0;
  min-height: 100vh;
  display: flex;
  flex-direction: column;
  background: #505050;
  color: #c8c8c8;
  font: 6px/8px "Noto Sans", "Open Sans", sans-serif;
  overflow: hidden;
}
button, input, select { font: inherit; color: inherit; margin: 0; padding: 0; border: 0; border-radius: 0; background: none; }
select { appearance: none; }
svg { display: block; flex: none; overflow: visible; }
a { color: inherit; text-decoration: none; }
.defs { position: absolute; width: 0; height: 0; }
.sr { position: absolute; width: 1px; height: 1px; overflow: hidden; clip-path: inset(50%); }
.chev { width: 8px; height: 8px; color: #aaa; pointer-events: none; }
.side { transform: rotate(-90deg); }
.back { transform: rotate(90deg); }
.up { transform: rotate(180deg); }

/* System menu bar */
.menubar {
  height: 13px;
  display: flex;
  align-items: center;
  gap: 10px;
  padding: 0 12px 0 10px;
  background: #d5dcee;
  color: #15192b;
  border-bottom: 1px solid #46506a;
  font: 500 8px/12px Inter, sans-serif;
  white-space: nowrap;
}
.apple { width: 10px; height: 10px; }
.app-name { font-weight: 700; }
.tray { margin-left: auto; display: flex; align-items: center; gap: 4px; }
.tray svg { width: 12px; height: 10px; }
.tray span { margin-left: 4px; }
.tray .percent { margin-left: 1px; font-size: 7px; }
.tray .battery { width: 14px; margin: 0 3px 0 1px; }
.input-source { width: 9px; height: 9px; margin-right: 2px; background: #15192b; color: #e5eafa; font: 700 7px/9px Inter, sans-serif; text-align: center; }
.tray .tray-search { margin-left: 3px; }
.tray .tray-siri { width: 10px; margin: 0 1px 0 2px; }

/* Application bar */
.appbar {
  height: 19px;
  display: flex;
  align-items: center;
  background: #515151;
  border-bottom: 1px solid #404040;
}
.lights { display: flex; gap: 4px; margin-left: 5px; }
.light { width: 7px; height: 7px; border-radius: 50%; }
.red { background: radial-gradient(circle, #5b0c08 1px, #ff5147 2px); }
.yellow { background: #fdbc2e; }
.green { background: #29ca41; }
.ai-logo { width: 22px; margin-left: 10px; color: #c28562; font: 500 11px/14px "Noto Sans", sans-serif; }
.mini { width: 10px; height: 10px; margin: 0 9px 0 1px; background: #c2c2c2; color: #4a4a4a; font-weight: 600; }
.arrange { display: flex; align-items: center; gap: 2px; margin-left: -2px; }
.arrange svg:first-child { width: 10px; height: 8px; }
.rocket { width: 10px; height: 10px; margin-left: 8px; }
.workspace-pick { display: flex; align-items: center; gap: 4px; margin-left: auto; margin-right: 10px; padding-left: 7px; height: 14px; border-left: 1px solid #606060; color: #e2e2e2; font: 700 7px/14px "Noto Sans", sans-serif; }
.workspace-pick select { height: 14px; padding-right: 1px; }
.stock { width: 104px; height: 11px; display: flex; align-items: center; gap: 2px; margin-right: 3px; padding: 0 2px; background: #444; border: 1px solid #5c5c5c; }
.stock svg { width: 12px; height: 10px; }
.stock input { width: 100%; min-width: 0; font-size: 6px; outline: 0; }
.stock input::placeholder { color: #8a8a8a; opacity: 1; }

/* Control bar */
.controlbar {
  height: 19px;
  display: flex;
  align-items: center;
  gap: 4px;
  background: #505050;
  border-bottom: 1px solid #3f3f3f;
  white-space: nowrap;
}
.vgrip { width: 2px; height: 12px; margin-left: 2px; }
.selection { width: 50px; border-right: 1px solid #5b5b5b; }
.pair { display: flex; height: 11px; }
.first { margin-left: -1px; }
.drop { width: 10px; display: grid; place-items: center; background: #484848; }
.swatch { width: 12px; height: 11px; border: 1px solid #aaa; }
.fill { background: #000; }
.stroke { display: grid; place-items: center; background: #000; }
.stroke i { width: 5px; height: 5px; border: 2px solid #ddd; background: #000; }
.white { width: 11px; background: #e2e2e2; }
.link { color: #dcdcdc; text-decoration: underline dotted; text-underline-offset: 1px; }
.stroke-label { margin-left: 1px; }
.stepper svg { width: 7px; height: 10px; }
.stepper { margin-right: -2px; }
.box { height: 11px; padding-left: 2px; background: #434343; color: #d5d5d5; }
.weight { width: 27px; }
.opacity { width: 30px; }
.light-box { width: 49px; display: flex; align-items: center; justify-content: space-between; padding: 0 2px; background: #e0e0e0; color: #292929; }
.profile { width: 20px; height: 4px; }
.dot { width: 4px; height: 4px; margin-left: 2px; }
.doc-buttons { display: flex; gap: 2px; margin-left: -1px; padding-left: 2px; border-left: 1px solid #5b5b5b; }
.doc-buttons button { height: 11px; padding: 0 4px; border: 1px solid #686868; border-radius: 1px; color: #e6e6e6; font-weight: 600; }
.similar { width: 18px; height: 10px; }
.bar-end { display: flex; gap: 6px; margin-left: auto; margin-right: 9px; }
.bar-end svg { width: 8px; height: 8px; }
.bar-end .snap { width: 18px; }

/* Work area */
.workspace { flex: 1; min-height: 0; display: flex; }
.document { flex: 1; min-width: 0; display: flex; flex-direction: column; }
.tabs { height: 16px; flex: none; display: flex; background: #424242; }
.tab { display: flex; align-items: center; gap: 6px; padding: 0 6px 0 5px; background: #515151; color: #eee; font-weight: 600; }
.stage { flex: 1; min-height: 0; display: flex; }
.canvas { flex: 1; position: relative; background: #5f5f5e; }
.artboard { position: absolute; left: 197px; top: 35px; width: 260px; height: 260px; background: #000; box-shadow: 0 0 1px #222; }
.vscroll { width: 10px; display: flex; flex-direction: column; justify-content: space-between; align-items: center; padding: 1px 0; background: #4b4b4b; border-left: 1px solid #444; }
.vscroll i { width: 8px; height: 14px; border-radius: 4px; background: #656565; }

.tools { position: absolute; left: 8px; top: 61px; width: 40px; display: flex; flex-direction: column; align-items: center; padding: 0 1px 3px 0; background: #505050; box-shadow: 0 0 2px #333; }
.tools-head { align-self: stretch; height: 8px; margin-right: -1px; display: flex; align-items: center; justify-content: space-between; padding: 0 3px; background: #404040; color: #aaa; }
.tools-head svg, .strip-head svg, .panel-head svg { width: 6px; height: 4px; color: #aaa; }
.grip { width: 12px; height: 2px; margin: 1px 0 5px; color: #3b3b3b; }
.group { display: grid; grid-template-columns: 17px 17px; grid-auto-rows: 13px; justify-items: center; align-items: center; padding: 1px 0; border-bottom: 1px solid #5b5b5b; }
.tool { width: 14px; height: 12px; }
.selected { background: #2c2c2c; box-shadow: 0 0 0 1px #333; }
.corner { fill: #bbb; }
.colors { width: 34px; height: 32px; margin-top: 4px; }
.modes { width: 34px; height: 11px; margin-top: 2px; }
.screens { width: 34px; height: 14px; margin-top: 1px; }

/* Status bar */
.status { height: 10px; flex: none; display: flex; align-items: center; background: #484848; color: #d5d5d5; border-top: 1px solid #444; }
.zoom, .page { display: flex; align-items: center; justify-content: space-between; background: #404040; }
.zoom { width: 40px; padding-left: 4px; }
.page { width: 32px; padding-left: 2px; }
.nav { width: 18px; height: 8px; margin: 0 2px 0 4px; }
.hint { margin-left: 24px; }
.play { width: 8px; height: 8px; margin-left: 24px; margin-right: 2px; }
.hscroll { flex: 1; display: flex; align-items: center; justify-content: space-between; padding-right: 9px; background: #4b4b4b; }
.hscroll .chev { color: #858585; }
.vscroll .chev { color: #858585; }
.hscroll i { width: 13px; height: 8px; border-radius: 4px; background: #656565; }

/* Collapsed panels */
.strip { width: 23px; border-left: 1px solid #3b3b3b; border-right: 1px solid #3b3b3b; background: #505050; }
.strip-head, .panel-head { height: 7px; display: flex; align-items: center; justify-content: flex-end; padding-right: 3px; background: #424242; }
.strip-group { display: flex; flex-direction: column; align-items: center; padding-bottom: 2px; border-bottom: 1px solid #3b3b3b; }
.strip-group svg { width: 14px; height: 12px; margin-bottom: 3px; }
.strip-group .grip { width: 12px; height: 2px; margin: 1px 0 3px; }
.strip-group svg:last-child { margin-bottom: 2px; }

/* Image Trace panel */
.panel { width: 150px; min-width: 0; background: #505050; color: #8c8c8c; }
.panel-tabs { height: 15px; display: flex; background: #424242; }
.panel-tabs h2 { margin: 0; padding: 0 4px; background: #515151; color: #efefef; font: 600 6px/15px "Noto Sans", sans-serif; }
.trace { padding: 5px 3px 3px; border-bottom: 1px solid #414141; }
.presets { display: flex; justify-content: center; gap: 6px; padding-bottom: 6px; border-bottom: 1px solid #646464; margin-bottom: 3px; }
.presets svg { width: 10px; height: 10px; }
.row { display: grid; grid-template-columns: 28px 1fr 8px; align-items: center; column-gap: 2px; margin-bottom: 3px; padding-right: 3px; }
.row label { text-align: right; }
.field { position: relative; margin-right: 5px; }
.field select { display: block; width: 100%; height: 12px; padding-left: 4px; background: #575757; color: #989898; }
.field .chev { position: absolute; right: 2px; top: 2px; color: #777; }
.side-icon { width: 8px; height: 8px; }
.threshold { display: flex; align-items: center; gap: 3px; height: 12px; }
.threshold input[type="range"] { flex: 1; min-width: 0; height: 8px; appearance: none; background: linear-gradient(#6a6a6a, #6a6a6a) center / 100% 1px no-repeat; }
.threshold input[type="range"]::-webkit-slider-thumb { appearance: none; width: 7px; height: 7px; border: 1px solid #8c8c8c; border-radius: 50%; background: #505050; }
.value { width: 24px; height: 12px; background: #575757; color: #676767; text-align: center; }
.limits { display: flex; justify-content: space-between; padding: 0 27px 0 31px; line-height: 7px; color: #999; }
.advanced { width: 100%; display: flex; align-items: center; gap: 3px; padding: 4px 0 4px 3px; color: #e5e5e5; line-height: 8px; font-weight: 500; }
.advanced svg { width: 6px; height: 7px; }
.advanced::after { content: ""; flex: 1; height: 1px; margin-left: -2px; background: #646464; }
.stats { display: flex; align-items: center; gap: 4px; padding: 2px 0; border-top: 1px solid #646464; border-bottom: 1px solid #646464; }
.stats svg { width: 10px; height: 10px; }
.stats dl { flex: 1; display: grid; grid-template-columns: 27px 47px 22px 1fr; margin: 0; line-height: 11px; }
.stats dd { margin: 0; }
.actions { display: flex; align-items: center; justify-content: space-between; padding-top: 3px; }
.actions label { display: flex; align-items: center; gap: 3px; }
.actions input { appearance: none; width: 7px; height: 7px; border: 1px solid #727272; }
.actions button { width: 40px; height: 11px; background: #585858; }

/* Dock; a sliver of another window shows at its far right */
.desktop { height: 30px; flex: none; padding: 0 19px 0 21px; background: #111a1e; border-right: 2px solid #e6e6e6; }
.dock { height: 30px; display: flex; padding: 2px 0 0 1px; background: #666a6f; border-top: 1px solid #3e4143; }
.dock > svg { flex: 1; height: 24px; min-width: 0; }
.trash { width: 33px; height: 24px; margin-left: 5px; padding-left: 5px; border-left: 1px solid #4a4c50; }
.trash svg { width: 24px; height: 24px; }
.dock > svg:nth-child(1), .dock > svg:nth-child(5), .dock > svg:nth-child(9), .dock > svg:nth-child(17),
.dock > svg:nth-child(19), .dock > svg:nth-child(20), .dock > svg:nth-child(23), .dock > svg:nth-child(25),
.dock > svg:nth-child(26), .dock > svg:nth-child(27), .dock > svg:nth-child(28) {
  height: 27px;
  padding-bottom: 3px;
  background: radial-gradient(circle at 50% 25px, #080808 1px, transparent 2px);
}
.dock text { text-anchor: middle; font-family: Lato, sans-serif; }
.dock .cal-month { font-size: 4px; fill: #fff; }
.dock .cal-day { font-size: 11px; fill: #333; }
.dock .badge { font-size: 6px; fill: #fff; }
.dock .adobe { font-size: 12px; font-weight: 700; }
.dock .ps { fill: #29c5e5; }
.dock .ai { fill: #f08a1c; }
```
